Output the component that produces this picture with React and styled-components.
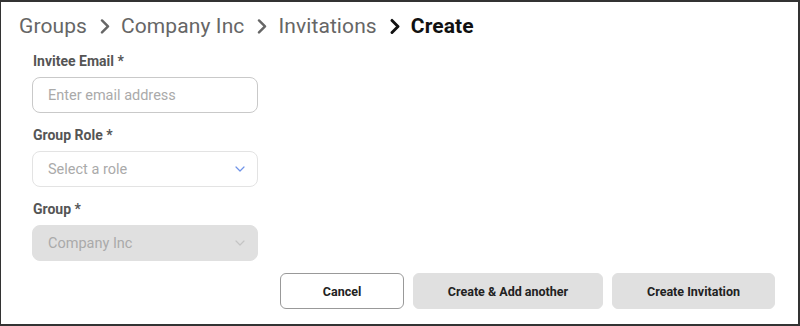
import React from "react";
import styled, { createGlobalStyle } from "styled-components";

const Global = createGlobalStyle`
  * { box-sizing: border-box; }
  html, body { margin: 0; padding: 0; background: #fff; }
  body { font-family: Roboto, "Liberation Sans", sans-serif; }
`;

const Frame = styled.div`
  width: 800px;
  height: 326px;
  border: 2px solid #333;
  border-left-width: 1px;
  background: #fff;
  display: flex;
  flex-direction: column;
  padding: 9px 23px 0 18px;
`;

const Breadcrumb = styled.nav`
  display: flex;
  align-items: center;
  height: 30px;
  font-size: 21px;
  color: #666;
`;

const Crumb = styled.span`
  font-weight: ${(p) => (p.$current ? 700 : 400)};
  color: ${(p) => (p.$current ? "#111" : "#666")};
  letter-spacing: 0.1px;
`;

const Sep = styled.span`
  display: inline-flex;
  align-items: center;
  margin: 0 10px 0 12px;
  color: ${(p) => (p.$dark ? "#111" : "#666")};
`;

const Form = styled.div`
  display: flex;
  flex-direction: column;
  gap: 13px;
  width: 226px;
  margin: 11px 0 0 13px;
`;

const Field = styled.div`
  display: flex;
  flex-direction: column;
  gap: 7px;
`;

const Label = styled.label`
  font-size: 14px;
  line-height: 18px;
  font-weight: 700;
  color: #555;
  padding-left: 1px;
`;

const Control = styled.div`
  height: 36px;
  border-radius: 8px;
  border: 1px solid ${(p) => (p.$disabled ? "#e0e0e0" : p.$soft ? "#e3e3e3" : "#c9c9c9")};
  background: ${(p) => (p.$disabled ? "#e0e0e0" : "#fff")};
  display: flex;
  align-items: center;
  justify-content: space-between;
  padding: 0 12px 0 15px;
  font-size: 14.5px;
  color: #aaa;
`;

const Actions = styled.div`
  display: flex;
  justify-content: flex-end;
  gap: 9px;
  margin-top: 12px;
`;

const Button = styled.button`
  height: 36px;
  width: ${(p) => p.$w}px;
  border-radius: 6px;
  font-family: inherit;
  font-size: 12.5px;
  font-weight: 700;
  color: #222;
  cursor: pointer;
  border: 1px solid ${(p) => (p.$outline ? "#999" : "#e0e0e0")};
  background: ${(p) => (p.$outline ? "#fff" : "#e0e0e0")};
`;

const Chevron = ({ color = "#555", size = 14, sw = 2.4 }) => (
  <svg width={size} height={size * 1.4} viewBox="0 0 10 14" fill="none">
    <path d="M2.5 2 L7.5 7 L2.5 12" stroke={color} strokeWidth={sw} strokeLinecap="round" strokeLinejoin="round" />
  </svg>
);

const Down = ({ color }) => (
  <svg width="10" height="6" viewBox="0 0 10 6" fill="none">
    <path d="M1 1 L5 5 L9 1" stroke={color} strokeWidth="1.2" strokeLinecap="round" strokeLinejoin="round" />
  </svg>
);

export default function App() {
  return (
    <>
      <Global />
      <Frame>
        <Breadcrumb>
          <Crumb>Groups</Crumb>
          <Sep><Chevron color="#666" size={12} sw={2} /></Sep>
          <Crumb>Company Inc</Crumb>
          <Sep><Chevron color="#666" size={12} sw={2} /></Sep>
          <Crumb>Invitations</Crumb>
          <Sep $dark><Chevron color="#111" size={12} sw={2.4} /></Sep>
          <Crumb $current>Create</Crumb>
        </Breadcrumb>
        <Form>
          <Field>
            <Label>Invitee Email *</Label>
            <Control>Enter email address</Control>
          </Field>
          <Field>
            <Label>Group Role *</Label>
            <Control $soft>
              Select a role
              <Down color="#6f93e8" />
            </Control>
          </Field>
          <Field>
            <Label>Group *</Label>
            <Control $disabled>
              Company Inc
              <Down color="#c4c4c4" />
            </Control>
          </Field>
        </Form>
        <Actions>
          <Button $outline $w={124}>Cancel</Button>
          <Button $w={190}>Create &amp; Add another</Button>
          <Button $w={163}>Create Invitation</Button>
        </Actions>
      </Frame>
    </>
  );
}
